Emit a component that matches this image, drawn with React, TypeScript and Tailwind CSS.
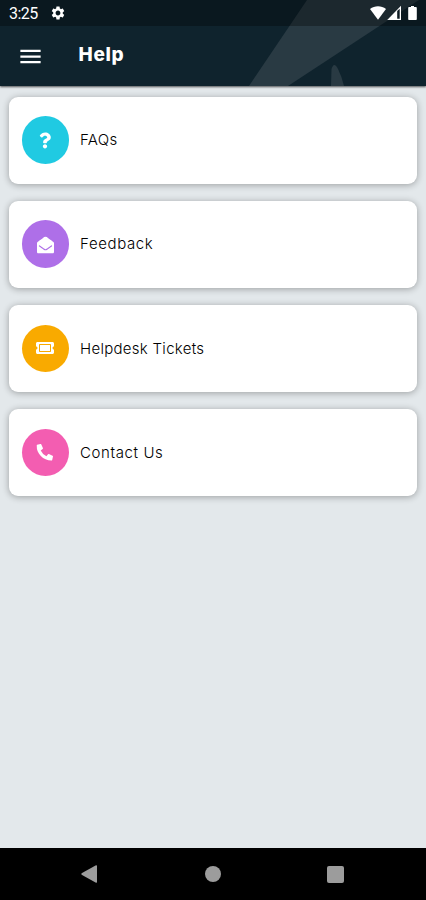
import type { ComponentType } from "react";
import { FaEnvelopeOpen, FaPhoneAlt, FaQuestion, FaTicketAlt } from "react-icons/fa";
import { MdMenu, MdSettings } from "react-icons/md";

interface HelpItem {
  title: string;
  icon: ComponentType<{ className?: string }>;
  color: string;
  tracking: string;
  iconClass: string;
}

const items: HelpItem[] = [
  { title: "FAQs", icon: FaQuestion, color: "bg-[#20cae2]", tracking: "tracking-[0.3px]", iconClass: "h-[17px] w-[12px]" },
  { title: "Feedback", icon: FaEnvelopeOpen, color: "bg-[#ae6fe8]", tracking: "tracking-[0.6px]", iconClass: "size-[17px] translate-y-[0.5px]" },
  { title: "Helpdesk Tickets", icon: FaTicketAlt, color: "bg-[#f9aa00]", tracking: "tracking-[0.28px]", iconClass: "h-4 w-[18px]" },
  { title: "Contact Us", icon: FaPhoneAlt, color: "bg-[#f35db1]", tracking: "tracking-[0.6px]", iconClass: "size-[16.5px] -translate-x-[0.5px]" },
];

function StatusBar() {
  return (
    <div className="flex h-[26px] items-center justify-between bg-black/30 pr-2 pl-[9px] text-white">
      <div className="flex items-center gap-[11px]">
        <span className="w-[30px] pt-px font-['Roboto',sans-serif] text-[16px] leading-[26px] tracking-[-0.5px] whitespace-nowrap">3:25</span>
        <MdSettings className="size-4" />
      </div>
      <svg width="48" height="16" viewBox="0 0 48 16" fill="currentColor">
        <path d="M0 4.1C4.6 0.3 11.4 0.3 16 4.1L8 14.8Z" />
        <path d="M31 0.8V15H17.2Z" />
        <path d="M27.2 6V13.8H29.7V3.7Z" fill="#0d1a21" />
        <path d="M41 1.1h3v1h1.7c.7 0 1.1.4 1.1 1.1v10.7c0 .7-.4 1.1-1.1 1.1h-6.4c-.7 0-1.1-.4-1.1-1.1V3.2c0-.7.4-1.1 1.1-1.1H41z" />
      </svg>
    </div>
  );
}

function Header() {
  return (
    <header className="relative z-10 h-[86px] shrink-0 bg-[#0f232d] shadow-[0_1px_2px_rgba(0,0,0,0.65)]">
      <svg className="absolute inset-0" width="426" height="86" viewBox="0 0 426 86" fill="#293a43">
        <path d="M307 0H419L288 86H249Z" />
        <path d="M331 86L331.500 69Q334 61 338 69Q342 77 344 86Z" />
      </svg>
      <div className="relative">
        <StatusBar />
        <div className="flex h-[60px] items-center text-white">
          <button className="ml-[17px]" aria-label="Open menu">
            <MdMenu className="size-[27px]" />
          </button>
          <h1 className="ml-[34.6px] pb-[1px] font-['Inter',sans-serif] text-[19px] font-extrabold tracking-[0.6px]">Help</h1>
        </div>
      </div>
    </header>
  );
}

function HelpCard({ item }: { item: HelpItem }) {
  const Icon = item.icon;
  return (
    <div className="flex h-[87px] shrink-0 items-center rounded-[9px] bg-white pl-[13px] shadow-[0_1px_7px_rgba(0,0,0,0.32)]">
      <div className={`flex size-[47.5px] items-center justify-center rounded-full text-white ${item.color}`}>
        <Icon className={item.iconClass} />
      </div>
      <span className={`ml-[11px] pt-px font-['Inter',sans-serif] text-[15px] font-light text-black ${item.tracking}`}>{item.title}</span>
    </div>
  );
}

function NavigationBar() {
  return (
    <nav className="flex h-[52px] shrink-0 items-center bg-black pl-[81px] text-[#9c9c9c]">
      <svg width="16" height="18" viewBox="0 0 16 18" fill="currentColor">
        <path d="M15 .2Q16 0 16 1V17Q16 18 15 17.7L.6 9.8Q0 9 .6 8.3Z" />
      </svg>
      <div className="ml-[108px] size-4 rounded-full bg-[#9c9c9c]" />
      <div className="ml-[106px] size-[17px] rounded-[2px] bg-[#9c9c9c]" />
    </nav>
  );
}

export default function App() {
  return (
    <div className="flex h-[900px] w-[426px] flex-col overflow-hidden bg-[#e3e8eb]">
      <Header />
      <main className="flex flex-1 flex-col gap-[17.2px] pt-[10.5px] pr-[8.6px] pl-[8.6px]">
        {items.map((item) => (
          <HelpCard key={item.title} item={item} />
        ))}
      </main>
      <NavigationBar />
    </div>
  );
}
